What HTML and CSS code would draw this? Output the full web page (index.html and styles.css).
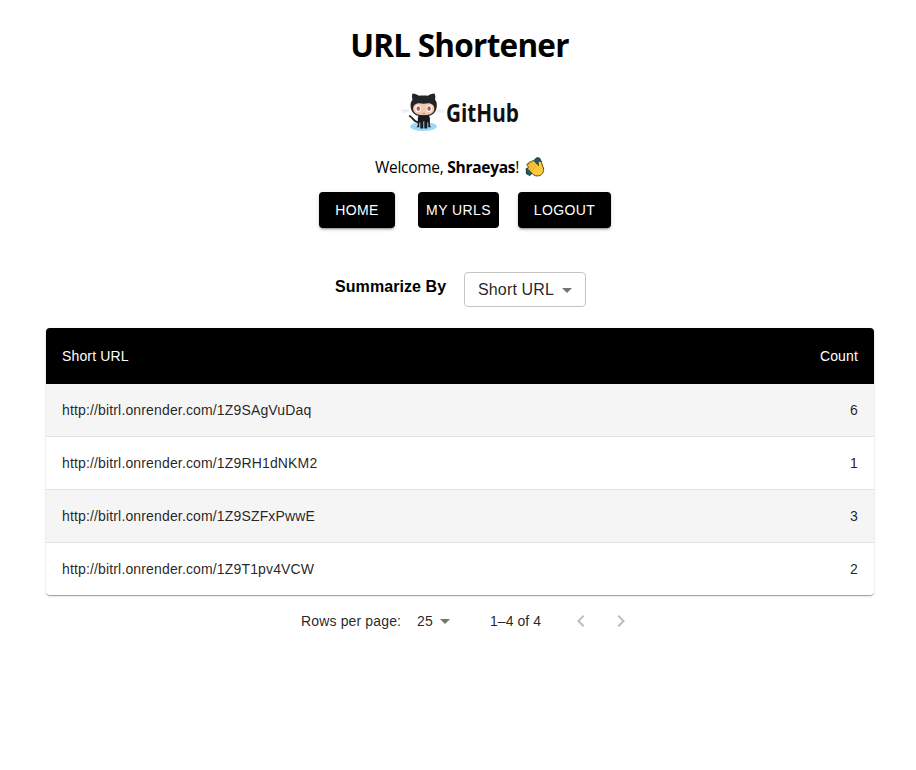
FILE: index.html
```html
<!DOCTYPE html>
<html lang="en">
<head>
<meta charset="utf-8">
<title>URL Shortener</title>
<link rel="stylesheet" href="styles.css">
</head>
<body>
<header class="header">
  <h1 class="title">URL Shortener</h1>
  <div class="brand">
    <svg class="octocat" viewBox="0 0 50 48" width="50" height="48" aria-hidden="true">
      <path d="M1 22.2h8M1.500 24.300l7-.8M37 22.200h8M37 23.600l7 .6" stroke="#e2e2e2" stroke-width=".8" fill="none"/>
      <ellipse cx="23.500" cy="38.500" rx="13.300" ry="4.500" fill="#9fd8f4"/>
      <path d="M18.500 34.200C14 35 13.800 30 9.700 28" stroke="#20262a" stroke-width="1.800" fill="none" stroke-linecap="round"/>
      <path d="M19 26h9.500l1.400 4v6.200c0 1.700.5 2.400 1.300 3H28.300v-4.700h-1v6h-3v-7h-1v7h-3v-6h-1v4.700h-3c1-.6 1.500-1.400 1.500-3V30z" fill="#171b1d"/>
      <path d="M12.500 5.500c2.600 0 5 1.100 6.500 2.300 2.600-.5 6.200-.5 8.800 0 1.500-1.200 4.100-2.300 6.700-2.300 1 2 1 4.300.5 6 1.500 1.800 2 3.800 1.800 6.500-.4 7-4.400 10.300-13.100 10.300S11 25 10.600 18c-.2-2.700.5-4.700 1.900-6.500-.6-2-.8-4.100 0-6z" fill="#222426"/>
      <path d="M17.200 15.400c2.200-.5 4.200.3 6.500.3s4.300-.8 6.500-.3c2.600.5 4.100 2.400 4.100 5 0 4.600-3.600 6.500-10.600 6.500s-10.600-1.900-10.600-6.500c0-2.600 1.500-4.500 4.100-5z" fill="#f3c9b2"/>
      <ellipse cx="18.100" cy="20.400" rx="2.700" ry="3.500" fill="#fff"/>
      <ellipse cx="29.300" cy="20.400" rx="2.700" ry="3.500" fill="#fff"/>
      <ellipse cx="18.300" cy="20.600" rx="1.700" ry="2.400" fill="#a75c52"/>
      <ellipse cx="29.100" cy="20.600" rx="1.700" ry="2.400" fill="#a75c52"/>
      <path d="M22.400 25.300q1.300.8 2.600 0" stroke="#a75c52" stroke-width=".7" fill="none"/>
    </svg>
    <svg class="wordmark" viewBox="0 0 74 30" width="74" height="30">
      <text x="0" y="23" textLength="73" lengthAdjust="spacingAndGlyphs">GitHub</text>
    </svg>
  </div>
  <p class="welcome"><span class="hello">Welcome, </span><strong>Shraeyas</strong><span>!</span>
    <svg class="clap" viewBox="0 0 20 20" width="20" height="20" aria-hidden="true">
      <path d="M9 3.500 11.500.8 14.500 1l2 4-4 2z" fill="#125f74" stroke="#15333b"/>
      <path d="M1.200 11.500 5 11l2 5-2 2.500-3.500-1.700z" fill="#125f74" stroke="#15333b"/>
      <path d="M2 8.500c-.6-1.300.7-2.500 1.800-1.700-.4-1.600 1.200-2.600 2.400-1.600.1-1.500 1.900-2 2.900-.9l4.400 4.500-.3-2.700c-.1-2 2.400-2.500 3.200-.6l2 5.500c.9 3.300-.8 6.700-4.200 7.700-2.700.8-5.100-.2-6.700-1.800L3.200 12.500c-1-1-.4-2.200.6-2.400z" fill="#ffc83d" stroke="#493916" stroke-width=".9"/>
      <path d="M3.800 7 9 12.200M6.200 5.300l5 5.200M3.500 10l4.600 4.600" stroke="#c98f24" stroke-width=".7" fill="none"/>
    </svg>
  </p>
  <nav class="nav">
    <button class="btn raised home">HOME</button>
    <button class="btn urls">MY URLS</button>
    <button class="btn raised logout">LOGOUT</button>
  </nav>
</header>
<main class="content">
  <div class="summary">
    <span class="summary-label">Summarize By</span>
    <div class="select"><span>Short URL</span><svg class="caret" viewBox="0 0 10 5" width="10" height="5"><path d="M0 0h10L5 5z"/></svg></div>
  </div>
  <div class="card">
    <table class="table">
      <thead><tr><th>Short URL</th><th class="num">Count</th></tr></thead>
      <tbody>
        <tr><td>http://bitrl.onrender.com/1Z9SAgVuDaq</td><td class="num">6</td></tr>
        <tr><td>http://bitrl.onrender.com/1Z9RH1dNKM2</td><td class="num active">1</td></tr>
        <tr><td>http://bitrl.onrender.com/1Z9SZFxPwwE</td><td class="num">3</td></tr>
        <tr><td>http://bitrl.onrender.com/1Z9T1pv4VCW</td><td class="num">2</td></tr>
      </tbody>
    </table>
  </div>
  <div class="pager">
    <span class="rows-label">Rows per page:</span>
    <span class="rows-value">25</span>
    <svg class="caret" viewBox="0 0 10 5" width="10" height="5"><path d="M0 0h10L5 5z"/></svg>
    <span class="range">1–4 of 4</span>
    <svg class="arrow" viewBox="0 0 24 24" width="24" height="24"><path d="M15.410 16.590 10.830 12l4.580-4.590L14 6l-6 6 6 6z"/></svg>
    <svg class="arrow" viewBox="0 0 24 24" width="24" height="24"><path d="M8.590 16.590 13.170 12 8.590 7.410 10 6l6 6-6 6z"/></svg>
  </div>
</main>
</body>
</html>
```
FILE: styles.css
```css
* { box-sizing: border-box; }
body {
  margin: 0;
  background: #fff;
  color: #000;
  font-family: "Liberation Sans", Arial, sans-serif;
}
.header {
  display: flex;
  flex-direction: column;
  align-items: center;
  padding-top: 23px;
  font-family: "Open Sans", "Noto Sans", sans-serif;
}
.title {
  margin: 0 0 0 3px;
  height: 43px;
  line-height: 43px;
  font-size: 31.5px;
  font-weight: 700;
  letter-spacing: -.75px;
  white-space: nowrap;
}
.brand {
  display: flex;
  align-items: flex-start;
  width: 120px;
  height: 48px;
  margin-top: 22px;
}
.octocat { flex: none; margin-left: 2px; }
.wordmark { flex: none; margin: 11px 0 0 -4px; overflow: visible; }
.wordmark text {
  font: 700 25px "Open Sans", sans-serif;
  fill: #111;
}
.welcome {
  display: flex;
  align-items: center;
  height: 22px;
  margin: 20px 0 0 4px;
  font-size: 15.500px;
  line-height: 22px;
  letter-spacing: -.27px;
  white-space: pre;
}
.clap { margin: -1px 0 0 6px; }
.nav {
  display: flex;
  width: 292px;
  margin: 14px 0 0 14px;
}
.btn {
  height: 36px;
  padding: 0;
  border: 0;
  border-radius: 4px;
  background: #000;
  color: #fff;
  font: 400 14px/36px "Liberation Sans", Arial, sans-serif;
  letter-spacing: .4px;
}
.raised {
  box-shadow: 0 3px 1px -2px rgba(0,0,0,.2), 0 2px 2px rgba(0,0,0,.14), 0 1px 5px rgba(0,0,0,.12);
}
.home { width: 76px; }
.urls { width: 81px; margin: 0 19px 0 23px; }
.logout { width: 93px; }
.content { padding: 44px 42px 0 46px; }
.summary {
  display: flex;
  height: 35px;
  padding-left: 289px;
}
.summary-label {
  width: 129px;
  font-size: 16px;
  font-weight: 700;
  line-height: 29px;
  letter-spacing: .08px;
}
.select {
  display: flex;
  align-items: center;
  width: 122px;
  height: 35px;
  padding-left: 13px;
  border: 1px solid #c4c4c4;
  border-radius: 4px;
  color: rgba(0,0,0,.87);
  font-size: 16px;
  letter-spacing: .15px;
}
.caret { flex: none; fill: #757575; }
.select .caret { margin: 1px 0 0 8px; }
.card {
  margin-top: 21px;
  border-radius: 4px;
  overflow: hidden;
  box-shadow: 0 2px 1px -1px rgba(0,0,0,.2), 0 1px 1px rgba(0,0,0,.14), 0 1px 3px rgba(0,0,0,.12);
}
.table {
  width: 100%;
  border-collapse: separate;
  border-spacing: 0;
  font-size: 14px;
  line-height: 20px;
  letter-spacing: .15px;
}
.table th {
  height: 56px;
  padding: 0 16px;
  background: #000;
  color: #fff;
  font-weight: 400;
  text-align: left;
}
.table td {
  height: 53px;
  padding: 0 16px;
  border-bottom: 1px solid #e0e0e0;
  color: rgba(0,0,0,.87);
}
.table tbody tr:nth-child(odd) { background: #f5f5f5; }
.table tbody tr:last-child td { height: 52px; border-bottom: 0; }
.table .num { text-align: right; }
.table td.active { color: #501010; }
.pager {
  display: flex;
  align-items: center;
  height: 50px;
  margin-top: 1px;
  padding-left: 255px;
  color: rgba(0,0,0,.87);
  font-size: 14px;
  letter-spacing: .15px;
}
.rows-label { width: 116px; }
.rows-value { width: 23px; margin-top: -1px; }
.range { width: 79px; margin-left: 40px; letter-spacing: .05px; }
.arrow { flex: none; fill: #bdbdbd; }
.arrow + .arrow { margin-left: 16px; }
```
